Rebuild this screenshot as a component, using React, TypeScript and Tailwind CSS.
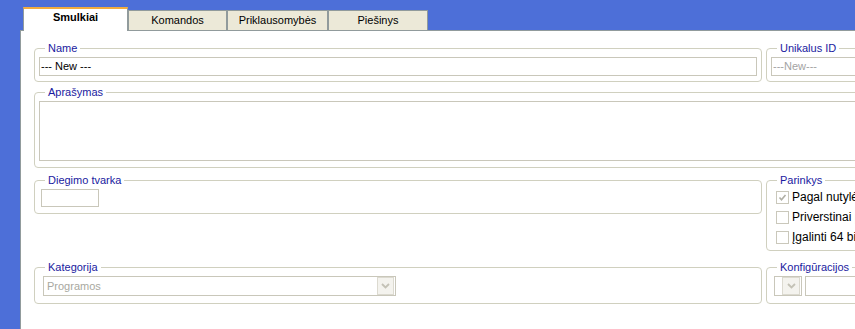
import React from "react";

const fs = "border border-[#d0d0bf] rounded-[4px] p-0 m-0 min-w-0 shrink-0";
const inputBox = "border border-[#c9c7ba] bg-white";

function Legend({ children }: { children: React.ReactNode }) {
  return (
    <legend className="ml-[10px] px-[3px] text-[11px] leading-[14px] text-[#1a1aa0]">
      {children}
    </legend>
  );
}

function Chevron() {
  return (
    <svg width="9" height="6" viewBox="0 0 9 6">
      <polyline points="1,1 4.5,4.5 8,1" fill="none" stroke="#c4c2b6" strokeWidth="1.8" />
    </svg>
  );
}

function DropBtn({ w, h }: { w: string; h: string }) {
  return (
    <div className={`${w} ${h} bg-[#f4f3ee] border border-[#dcdad0] flex items-center justify-center`}>
      <Chevron />
    </div>
  );
}

function Check({ checked, children }: { checked?: boolean; children: React.ReactNode }) {
  return (
    <div className="h-[20px] flex items-center gap-[3px] whitespace-nowrap">
      <div className="w-[13px] h-[13px] border border-[#cac8bb] bg-white flex items-center justify-center shrink-0">
        {checked && (
          <svg width="9" height="9" viewBox="0 0 9 9">
            <polyline points="1.5,4.5 3.5,6.8 7.5,2" fill="none" stroke="#b0afa5" strokeWidth="1.6" />
          </svg>
        )}
      </div>
      <span className="text-[12px] leading-[14px] text-black">{children}</span>
    </div>
  );
}

export default function App() {
  return (
    <div className="w-[855px] h-[329px] overflow-hidden bg-[#4d6fd8] flex flex-col font-['Liberation_Sans',Arial,sans-serif]">
      {/* Tabs */}
      <div className="h-[30px] flex items-end pl-[23px] shrink-0">
        <div className="relative z-10 -mb-px w-[105px] h-[24px] bg-white border-x border-[#919b9c] border-t-[2px] border-t-[#f2ac3e] flex justify-center pt-[2px] text-[11px] leading-[13px] font-bold text-black">
          Smulkiai
        </div>
        <div className="w-[99px] h-[20px] bg-[#ece9d8] border-x border-t border-[#919b9c] flex justify-center pt-[3px] text-[11px] leading-[13px] text-black">
          Komandos
        </div>
        <div className="w-[101px] h-[20px] bg-[#ece9d8] border-x border-t border-[#919b9c] flex justify-center pt-[3px] text-[11px] leading-[13px] text-black">
          Priklausomybės
        </div>
        <div className="w-[100px] h-[20px] bg-[#ece9d8] border-x border-t border-[#919b9c] flex justify-center pt-[3px] text-[11px] leading-[13px] text-black">
          Piešinys
        </div>
      </div>

      {/* Panel */}
      <div className="flex-1 ml-[20px] bg-white border-l border-t border-[#919b9c] pl-[13px] pt-[10px] w-[1000px]">
        {/* Row 1 */}
        <div className="flex gap-[4px] items-start">
          <fieldset className={`${fs} w-[728px] pb-[5px]`}>
            <Legend>Name</Legend>
            <div className="pt-[2px] px-[4px]">
              <div className={`${inputBox} h-[19px] pl-[1px] text-[11px] leading-[16px] text-black whitespace-nowrap`}>
                --- New ---
              </div>
            </div>
          </fieldset>
          <fieldset className={`${fs} w-[200px] pb-[5px]`}>
            <Legend>Unikalus ID</Legend>
            <div className="pt-[2px] pl-[4px] pr-[4px]">
              <div className={`${inputBox} h-[19px] pl-[1px] text-[11px] leading-[16px] text-[#a3a3a3] whitespace-nowrap`}>
                ---New---
              </div>
            </div>
          </fieldset>
        </div>

        {/* Aprasymas */}
        <fieldset className={`${fs} mt-[3px] w-[960px] pb-[6px]`}>
          <Legend>Aprašymas</Legend>
          <div className="pt-[2px] pl-[4px] pr-[4px]">
            <div className={`${inputBox} h-[60px]`} />
          </div>
        </fieldset>

        {/* Row 3 */}
        <div className="flex gap-[4px] items-start mt-[5px]">
          <fieldset className={`${fs} w-[728px] pb-[6px]`}>
            <Legend>Diegimo tvarka</Legend>
            <div className="pt-[2px] pl-[6px]">
              <div className={`${inputBox} w-[58px] h-[18px]`} />
            </div>
          </fieldset>
          <fieldset className={`${fs} w-[200px] pb-[3px]`}>
            <Legend>Parinkys</Legend>
            <div className="pl-[9px] flex flex-col">
              <Check checked>Pagal nutylėjimą</Check>
              <Check>Priverstinai perrašyti</Check>
              <Check>
                <span className="underline">Į</span>galinti 64 bitų
              </Check>
            </div>
          </fieldset>
        </div>

        {/* Row 4 */}
        <div className="flex gap-[4px] items-start mt-[9px]">
          <fieldset className={`${fs} w-[728px] pb-[7px]`}>
            <Legend>Kategorija</Legend>
            <div className="pt-[2px] pl-[8px]">
              <div className={`${inputBox} w-[353px] h-[20px] flex items-center justify-between pr-px`}>
                <span className="pl-[3px] text-[11px] leading-[14px] text-[#a8a8a0]">Programos</span>
                <DropBtn w="w-[17px]" h="h-[18px]" />
              </div>
            </div>
          </fieldset>
          <fieldset className={`${fs} w-[200px] pb-[7px]`}>
            <Legend>Konfigūracijos</Legend>
            <div className="pt-[2px] pl-[7px] flex gap-[3px]">
              <div className={`${inputBox} w-[28px] h-[20px] flex items-center justify-end pr-px`}>
                <DropBtn w="w-[18px]" h="h-[18px]" />
              </div>
              <div className={`${inputBox} w-[120px] h-[20px]`} />
            </div>
          </fieldset>
        </div>
      </div>
    </div>
  );
}
